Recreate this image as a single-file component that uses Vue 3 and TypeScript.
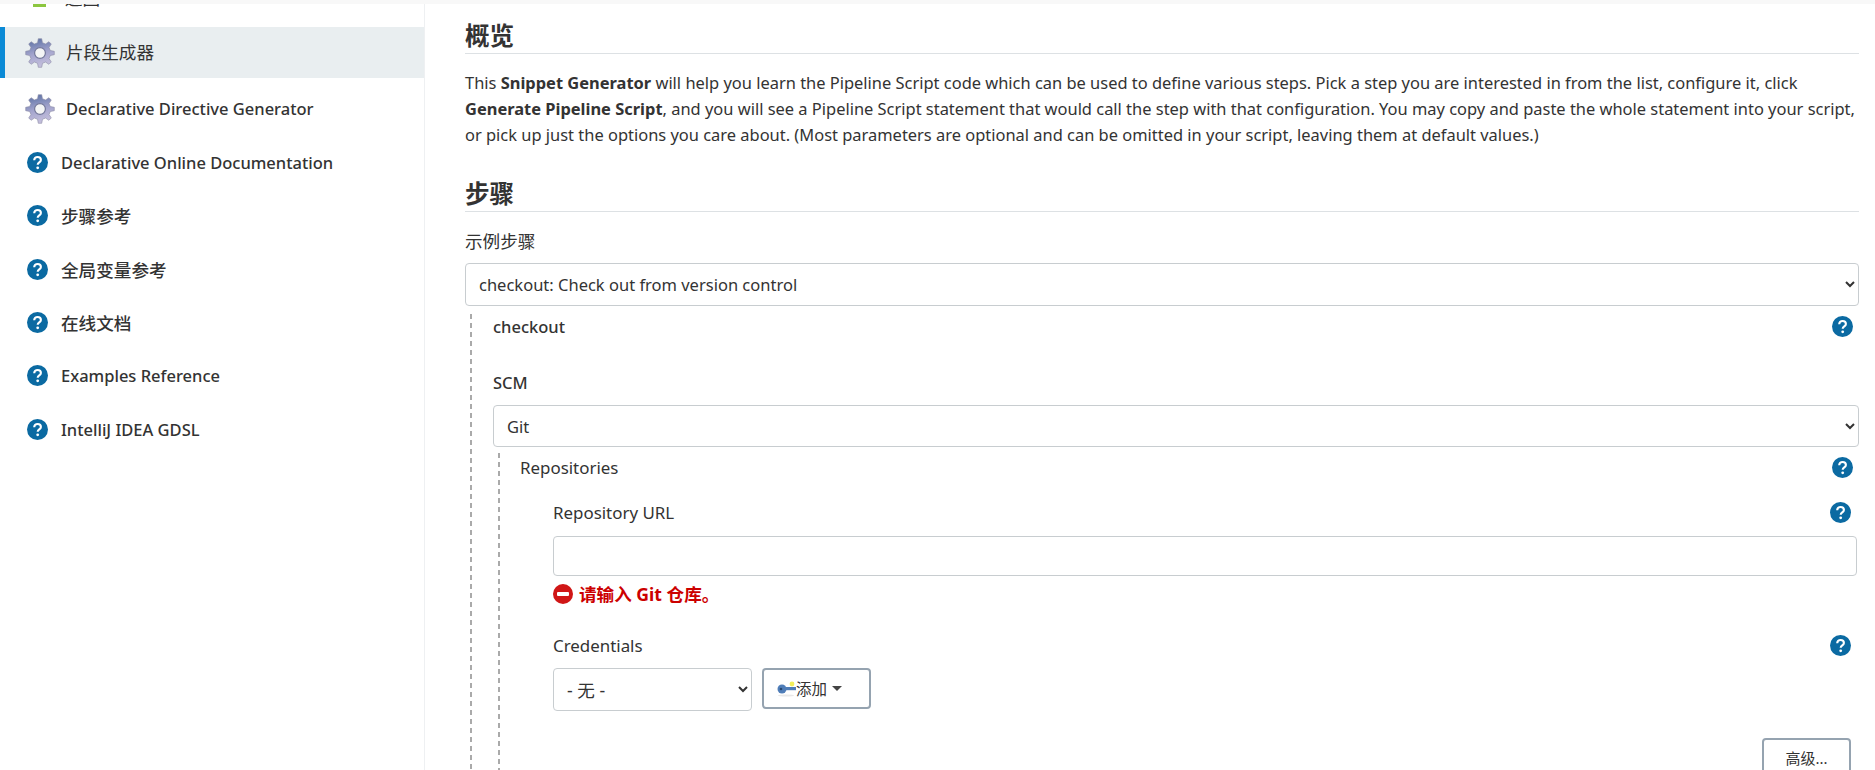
<script setup lang="ts">
interface NavItem {
  label: string
  icon: 'gear' | 'help'
  cjk?: boolean
  active?: boolean
}
const items: NavItem[] = [
  { label: '片段生成器', icon: 'gear', active: true, cjk: true },
  { label: 'Declarative Directive Generator', icon: 'gear' },
  { label: 'Declarative Online Documentation', icon: 'help' },
  { label: '步骤参考', icon: 'help', cjk: true },
  { label: '全局变量参考', icon: 'help', cjk: true },
  { label: '在线文档', icon: 'help', cjk: true },
  { label: 'Examples Reference', icon: 'help' },
  { label: 'IntelliJ IDEA GDSL', icon: 'help' }
]

function gearPath(): string {
  const teeth = 8
  const outer = 14.4
  const root = 10.6
  const parts: string[] = []
  for (let t = 0; t < teeth; t++) {
    const a = (t / teeth) * Math.PI * 2 - Math.PI / 2
    const step = (Math.PI * 2) / teeth
    const pts: [number, number][] = [
      [root, a - step * 0.3],
      [outer, a - step * 0.15],
      [outer, a + step * 0.15],
      [root, a + step * 0.3]
    ]
    for (const [r, ang] of pts) {
      const x = (15 + r * Math.cos(ang)).toFixed(2)
      const y = (15 + r * Math.sin(ang)).toFixed(2)
      parts.push(`${parts.length ? 'L' : 'M'}${x} ${y}`)
    }
  }
  return parts.join(' ') + ' Z'
}
const gear = gearPath()
</script>

<template>
  <div class="page">
    <div class="topline"></div>
    <div class="columns">
      <aside class="sidebar">
        <div class="back">
          <span class="back-icon"></span>
          <span class="back-text cjk">返回</span>
        </div>
        <div v-for="(item, i) in items" :key="item.label" class="nav" :class="[item.icon, { active: item.active }]">
          <svg v-if="item.icon === 'gear'" class="gear-icon" viewBox="0 0 30 30">
            <defs>
              <linearGradient :id="'g' + i" x1="0.35" y1="0" x2="0.6" y2="1">
                <stop offset="0" stop-color="#5f74a6" />
                <stop offset="0.5" stop-color="#a3a4cd" />
                <stop offset="1" stop-color="#c8c2de" />
              </linearGradient>
            </defs>
            <path :d="gear" :fill="'url(#g' + i + ')'" stroke="#8a8aa4" stroke-width="0.6" stroke-linejoin="round" />
            <circle cx="15" cy="15" r="5.400" fill="#f4f5f5" stroke="#74789a" stroke-width="1.200" />
          </svg>
          <svg v-else class="help-icon" viewBox="0 0 21 21">
            <circle cx="10.500" cy="10.500" r="10.500" fill="#0b6aa2" />
            <path d="M7.200 8.200c0-2 1.500-3.200 3.400-3.200s3.300 1.100 3.300 2.900c0 2.500-3.200 2.500-3.200 4.900" fill="none" stroke="#fff" stroke-width="2.100" />
            <circle cx="10.700" cy="15.800" r="1.400" fill="#fff" />
          </svg>
          <span class="nav-label" :class="{ cjk: item.cjk }">{{ item.label }}</span>
        </div>
      </aside>

      <main class="content">
        <h2 class="heading first">概览</h2>
        <p class="intro">This <b>Snippet Generator</b> will help you learn the Pipeline Script code which can be used to define various steps. Pick a step you are interested in from the list, configure it, click <b>Generate Pipeline Script</b>, and you will see a Pipeline Script statement that would call the step with that configuration. You may copy and paste the whole statement into your script, or pick up just the options you care about. (Most parameters are optional and can be omitted in your script, leaving them at default values.)</p>
        <h2 class="heading second">步骤</h2>
        <div class="field-label sample cjk">示例步骤</div>
        <select class="control step-select"><option>checkout: Check out from version control</option></select>

        <section class="dashed outer">
          <div class="row checkout-row">
            <span class="strong">checkout</span>
            <svg class="help-icon" viewBox="0 0 21 21"><circle cx="10.500" cy="10.500" r="10.500" fill="#0b6aa2" /><path d="M7.200 8.200c0-2 1.500-3.200 3.400-3.200s3.300 1.100 3.300 2.900c0 2.500-3.200 2.500-3.200 4.900" fill="none" stroke="#fff" stroke-width="2.100" /><circle cx="10.700" cy="15.800" r="1.400" fill="#fff" /></svg>
          </div>
          <div class="strong scm-label">SCM</div>
          <select class="control scm-select"><option>Git</option></select>

          <section class="dashed inner">
            <div class="row repos-row">
              <span class="medium">Repositories</span>
              <svg class="help-icon" viewBox="0 0 21 21"><circle cx="10.500" cy="10.500" r="10.500" fill="#0b6aa2" /><path d="M7.200 8.200c0-2 1.500-3.200 3.400-3.200s3.300 1.100 3.300 2.900c0 2.500-3.200 2.500-3.200 4.900" fill="none" stroke="#fff" stroke-width="2.100" /><circle cx="10.700" cy="15.800" r="1.400" fill="#fff" /></svg>
            </div>
            <div class="repo">
              <div class="row url-row">
                <span class="medium">Repository URL</span>
                <svg class="help-icon" viewBox="0 0 21 21"><circle cx="10.500" cy="10.500" r="10.500" fill="#0b6aa2" /><path d="M7.200 8.200c0-2 1.500-3.200 3.400-3.200s3.300 1.100 3.300 2.900c0 2.500-3.200 2.500-3.200 4.900" fill="none" stroke="#fff" stroke-width="2.100" /><circle cx="10.700" cy="15.800" r="1.400" fill="#fff" /></svg>
              </div>
              <input class="control url-input" type="text" />
              <div class="error">
                <svg class="error-icon" viewBox="0 0 20 20"><circle cx="10" cy="10" r="10" fill="#d01616" /><rect x="4" y="8" width="12" height="4" rx="1" fill="#fff" /></svg>
                <span>请输入 Git 仓库。</span>
              </div>
              <div class="row cred-row">
                <span class="medium">Credentials</span>
                <svg class="help-icon" viewBox="0 0 21 21"><circle cx="10.500" cy="10.500" r="10.500" fill="#0b6aa2" /><path d="M7.200 8.200c0-2 1.500-3.200 3.400-3.200s3.300 1.100 3.300 2.900c0 2.500-3.200 2.500-3.200 4.900" fill="none" stroke="#fff" stroke-width="2.100" /><circle cx="10.700" cy="15.800" r="1.400" fill="#fff" /></svg>
              </div>
              <div class="cred-controls">
                <select class="control cred-select"><option>- 无 -</option></select>
                <button class="btn add-btn" type="button">
                  <svg class="key-icon" viewBox="0 0 20 16">
                    <ellipse cx="9" cy="14.500" rx="8" ry="1" fill="#e8e8e8" />
                    <circle cx="15" cy="3" r="2.400" fill="#f3ef5a" />
                    <circle cx="5" cy="8" r="4.500" fill="#4f7db8" />
                    <circle cx="4" cy="8" r="1.300" fill="#26466e" />
                    <rect x="8" y="6" width="11" height="3.200" fill="#4f7db8" />
                  </svg>
                  <span class="add-text">添加</span>
                  <span class="caret"></span>
                </button>
              </div>
              <div class="advanced"><button class="btn adv-btn" type="button">高级...</button></div>
            </div>
          </section>
        </section>
      </main>
    </div>
  </div>
</template>

<style>
html, body { margin: 0; background: #fff; overflow: hidden; }
</style>

<style scoped>
.page {
  height: 770px;
  overflow: hidden;
  display: flex;
  flex-direction: column;
  font-family: "Noto Sans", "Noto Sans CJK SC", sans-serif;
  font-size: 16.5px;
  color: #333;
}
.cjk { font-size: 17.6px; }
.topline { height: 4px; background: #f8f8f8; flex: none; }
.columns { display: flex; flex: 1; min-height: 0; }
.sidebar { width: 424px; flex: none; border-right: 1px solid #eef0f2; }
.back { height: 23px; overflow: hidden; display: flex; align-items: flex-end; padding-left: 33px; gap: 19px; }
.back-icon { width: 13px; height: 3px; background: #8cc63f; margin-bottom: 20px; }
.back-text { line-height: 22px; height: 22px; margin-bottom: 18px; }
.nav { display: flex; align-items: center; height: 51px; margin-bottom: 4px; padding-left: 25px; font-weight: 500; }
.nav.gear { gap: 11px; }
.nav.gear + .nav.gear { margin-top: 5px; margin-bottom: 4px; height: 51px; }
.nav.help { gap: 13px; padding-left: 27px; height: 49.3px; }
.nav.active { background: #e9eef0; box-shadow: inset 5px 0 0 #0b8ad6; font-weight: 400; margin-bottom: 0; }
.nav.active .nav-label { padding-bottom: 2px; }
.gear-icon { width: 30px; height: 30px; flex: none; }
.help-icon { width: 21px; height: 21px; flex: none; display: block; }
.content { flex: 1; min-width: 0; padding: 0 16px 0 40px; }
.heading {
  margin: 0;
  font-size: 24.6px;
  line-height: 32px;
  font-weight: 700;
  border-bottom: 1px solid #dde1e4;
}
.heading.first { padding-top: 16px; padding-bottom: 1px; }
.heading.second { margin-top: 30px; padding-bottom: 1px; }
.intro { margin: 16px -6px 0 0; line-height: 26px; font-size: 16.44px; }
.intro b { font-weight: 700; }
.field-label.sample { margin-top: 16px; line-height: 26px; }
.control {
  box-sizing: border-box;
  width: 100%;
  display: block;
  border: 1px solid #c8cdd0;
  border-radius: 4px;
  background: #fff;
  color: #333;
  font: inherit;
  padding: 0 9px;
}
.step-select { height: 43px; margin-top: 9px; }
.dashed {
  background-image: repeating-linear-gradient(to bottom, #aaa 0, #aaa 5px, transparent 5px, transparent 9px);
  background-size: 2px 100%;
  background-repeat: no-repeat;
  background-position: left top;
}
.outer { margin: 8px 0 0 5px; padding-left: 23px; }
.row { display: flex; justify-content: space-between; align-items: center; }
.strong { font-weight: 500; }
.medium { font-weight: 400; font-size: 16.9px; }
.checkout-row { padding-right: 6px; height: 24px; }
.scm-label { margin-top: 32px; line-height: 26px; }
.scm-select { height: 42px; margin-top: 9px; }
.inner { margin: 6px 0 0 5px; padding-left: 22px; }
.repos-row { height: 24px; padding-right: 6px; padding-top: 2px; }
.repo { padding-left: 33px; }
.url-row { margin-top: 20px; padding-right: 8px; height: 26px; }
.url-input { height: 40px; margin-top: 11px; width: calc(100% - 2px); }
.error { display: flex; align-items: center; gap: 6px; margin-top: 6px; color: #c00; font-weight: 700; line-height: 24px; font-size: 17.6px; }
.error-icon { width: 20px; height: 20px; flex: none; }
.cred-row { margin-top: 26px; padding-right: 8px; height: 26px; }
.cred-controls { display: flex; gap: 10px; margin-top: 10px; align-items: flex-start; }
.cred-select { width: 199px; height: 43px; font-size: 17.6px; }
.btn {
  box-sizing: border-box;
  background: #fff;
  border: 2px solid #95a3b0;
  border-radius: 4px;
  color: #333;
  font: inherit;
  font-size: 15px;
}
.add-btn { width: 109px; height: 41px; display: flex; align-items: center; padding: 0 0 0 13px; }
.key-icon { width: 20px; height: 16px; flex: none; margin-right: -1px; }
.add-text { font-size: 15.500px; }
.caret { width: 0; height: 0; border: 5px solid transparent; border-top: 5px solid #444; border-bottom: 0; margin-left: 5px; }
.advanced { display: flex; justify-content: flex-end; margin-top: 27px; padding-right: 8px; }
.adv-btn { width: 89px; height: 44px; padding-bottom: 6px; }
</style>
